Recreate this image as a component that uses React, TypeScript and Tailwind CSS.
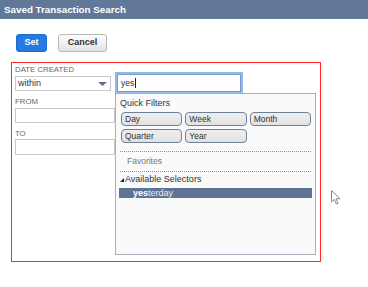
import React from "react";

export default function App() {
  const qf = ["Day", "Week", "Month", "Quarter", "Year"];
  return (
    <div className="relative w-[368px] h-[287px] overflow-hidden bg-white font-['Liberation_Sans',Arial,sans-serif] text-[#333]">
      <div className="h-[19px] bg-[#617899] pl-[4px] flex items-center text-white font-bold text-[9.8px] leading-none">
        Saved Transaction Search
      </div>
      <div className="flex gap-[11px] pl-[16px] pt-[15px]">
        <div className="w-[31px] h-[18px] rounded-[3px] bg-[#2479e2] border border-[#1f6cc9] text-white font-bold text-[9px] flex items-center justify-center">
          Set
        </div>
        <div className="w-[49px] h-[18px] rounded-[3px] bg-gradient-to-b from-[#fdfdfd] to-[#e4e4e4] border border-[#b7b7b7] text-[#333] font-bold text-[9px] flex items-center justify-center">
          Cancel
        </div>
      </div>
      <div className="mt-[10px] ml-[11px] w-[310px] h-[200px] border border-[#ff2b2b] flex">
        <div className="w-[100px] ml-[3px] pt-[2px] flex flex-col">
          <div className="h-[9px] leading-[9px] text-[7.8px] text-[#666]">DATE CREATED</div>
          <div className="mt-[2px] w-[96px] h-[15px] border border-[#c9c9c9] bg-white flex items-center justify-between pl-[2px] pr-[3px]">
            <span className="text-[9px] leading-none text-[#333]">within</span>
            <svg width="9" height="4" viewBox="0 0 9 4">
              <polygon points="0,0 9,0 4.5,4" fill="#5a6f90" />
            </svg>
          </div>
          <div className="mt-[6px] h-[9px] leading-[9px] text-[7.8px] text-[#666]">FROM</div>
          <div className="mt-[2px] w-[100px] h-[15px] border border-[#c9c9c9] bg-white" />
          <div className="mt-[6px] h-[9px] leading-[9px] text-[7.8px] text-[#666]">TO</div>
          <div className="mt-[1px] w-[100px] h-[16px] border border-[#c9c9c9] bg-white" />
        </div>
        <div className="w-[201px] mt-[9px] flex flex-col">
          <div className="relative z-10 w-[128px] h-[22px] border-2 border-[#8fb9ea] bg-white flex items-center pl-[4px]">
            <div className="w-full h-full absolute inset-0 border border-[#7a9cc8] pointer-events-none" />
            <span className="text-[8.5px] leading-none text-[#333]">yes</span>
            <span className="w-px h-[10px] bg-[#222] ml-px" />
          </div>
          <div className="-mt-px h-[162px] border border-[#a5afbd] bg-[#fafafa] px-[4px] flex flex-col">
            <div className="mt-[4px] h-[11px] leading-[11px] text-[9px] text-[#333]">Quick Filters</div>
            <div className="mt-[3px] ml-[1px] grid grid-cols-3 gap-x-[3px] gap-y-[3px]">
              {qf.map((q) => (
                <div
                  key={q}
                  className="h-[14px] rounded-[4px] border border-[#6f7f96] bg-gradient-to-b from-[#eeeeee] to-[#e2e2e2] pl-[3px] flex items-center text-[8.5px] leading-none text-[#333]"
                >
                  {q}
                </div>
              ))}
            </div>
            <div className="mt-[8px] border-t border-dotted border-[#8796ad]" />
            <div className="h-[19px] flex items-center pl-[7px] text-[8.5px] text-[#777]">Favorites</div>
            <div className="border-t border-dotted border-[#8796ad]" />
            <div className="h-[16px] flex items-center text-[9px] text-[#333]">
              <svg width="4" height="4" viewBox="0 0 4 4" className="mr-[1px]">
                <polygon points="4,0 4,4 0,4" fill="#222" />
              </svg>
              Available Selectors
            </div>
            <div className="-mx-[1px] h-[10px] bg-[#5f7494] pl-[14px] flex items-center text-[9px] leading-none text-white">
              <span className="font-bold">yes</span>
              <span className="text-[#e8ecf2]">terday</span>
            </div>
          </div>
        </div>
      </div>
      <svg
        className="absolute left-[331px] top-[190px]"
        width="11"
        height="15"
        viewBox="0 0 11 15"
      >
        <path
          d="M0.5 0.5 L0.5 12 L3.3 9.4 L5.4 14 L7 13.3 L5 8.8 L9 8.8 Z"
          fill="#fff"
          stroke="#8a8a8a"
          strokeWidth="1"
          strokeLinejoin="round"
        />
      </svg>
    </div>
  );
}
